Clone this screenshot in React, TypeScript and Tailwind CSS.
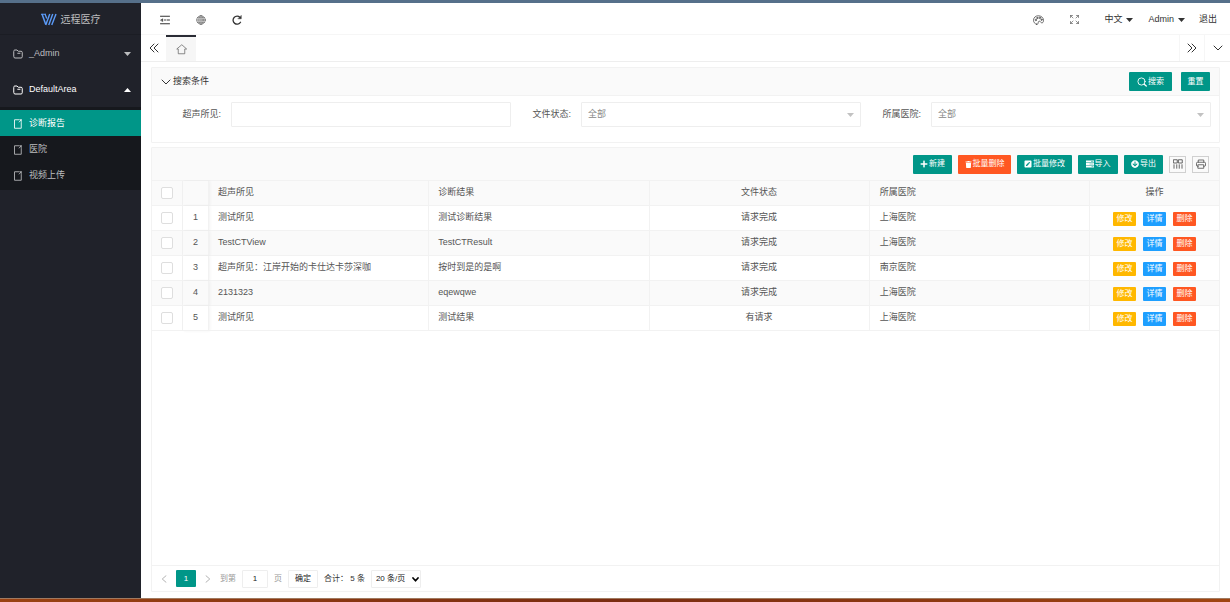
import React, { useState } from 'react';
import { FaPlus, FaTrash, FaPenSquare, FaArrowCircleDown } from 'react-icons/fa';

const stroke = {
  fill: 'none',
  stroke: 'currentColor',
  strokeLinecap: 'round' as const,
  strokeLinejoin: 'round' as const,
};

function Logo() {
  return (
    <svg className="h-[13px] w-4" viewBox="0 0 32 26" fill="none" stroke="#5b9bf8" aria-hidden="true">
      <path d="M2 2 L9.5 23" strokeWidth="3" />
      <path d="M8 2 L11.5 11" strokeWidth="2.6" />
      <path d="M0 2.5 H10" strokeWidth="2" />
      <path d="M9.5 24 L17.5 2" strokeWidth="2.8" />
      <path d="M15.5 24 L23.5 2" strokeWidth="2.8" />
      <path d="M21.5 24 L30 2" strokeWidth="2.8" />
    </svg>
  );
}

function FolderIcon() {
  return (
    <svg className="h-[10px] w-[10px]" viewBox="0 0 20 20" {...stroke} strokeWidth="2" aria-hidden="true">
      <path d="M1.5 4 Q1.5 2 3.5 2 H8 L10.5 4.5 H16 Q18.5 4.5 18.5 7 V15.5 Q18.5 18 16 18 H4 Q1.5 18 1.5 15.5 Z" />
      <path d="M9.5 8.5 H14" />
    </svg>
  );
}

function FileIcon() {
  return (
    <svg className="h-[10px] w-[10px]" viewBox="0 0 20 20" {...stroke} strokeWidth="1.7" aria-hidden="true">
      <path d="M11.5 1.5 H3 V18.5 H16.5 V7" />
      <path d="M12.5 6 L16.5 1.5 M13.5 1.5 H16.5 V5" />
    </svg>
  );
}

function MenuIcon() {
  return (
    <svg className="h-[10px] w-[10px]" viewBox="0 0 20 20" {...stroke} strokeWidth="2" aria-hidden="true">
      <path d="M1 2.5 H19 M9 10 H11 M14 10 H19 M1 17.5 H19" />
      <path d="M1.5 10 L5.5 7.5 V12.5 Z" fill="currentColor" strokeWidth="1" />
    </svg>
  );
}

function GlobeIcon() {
  return (
    <svg className="h-[10px] w-[10px] text-[#555]" viewBox="0 0 20 20" {...stroke} strokeWidth="1.2" aria-hidden="true">
      <circle cx="10" cy="10" r="8.6" />
      <ellipse cx="10" cy="10" rx="4.2" ry="8.6" />
      <path d="M10 1.4 V18.6 M1.4 10 H18.6 M2.8 5.5 H17.2 M2.8 14.5 H17.2" />
    </svg>
  );
}

function RefreshIcon() {
  return (
    <svg className="h-[10px] w-[10px]" viewBox="0 0 20 20" {...stroke} strokeWidth="2.6" aria-hidden="true">
      <path d="M17 14.5 A8 8 0 1 1 16 4.8" />
      <path d="M18.5 1.5 V7.5 H12.5 Z" fill="currentColor" strokeWidth="1" />
    </svg>
  );
}

function ThemeIcon() {
  return (
    <svg className="h-[10px] w-[11px]" viewBox="0 0 22 20" {...stroke} strokeWidth="1.4" aria-hidden="true">
      <path d="M7 18.5 C3 17.5 1 14 1 10.5 C1 5 5.5 1.5 10.5 1.5 C16.5 1.5 21 5.5 21 10.5 C21 14.5 19 16.5 17 15.5 C14.5 14.5 15 11.5 12 12.5 C9.5 13.5 11 16 10 17.5 C9.3 18.6 8.2 18.8 7 18.5 Z" />
      <circle cx="5.5" cy="10" r="1.3" />
      <circle cx="8.5" cy="6" r="1.3" />
      <circle cx="13.5" cy="5.8" r="1.3" />
      <circle cx="17" cy="9.5" r="1.3" />
    </svg>
  );
}

function FullscreenIcon() {
  return (
    <svg className="h-[9px] w-[9px] text-[#555]" viewBox="0 0 18 18" {...stroke} strokeWidth="1.3" aria-hidden="true">
      <path d="M1 5 V1 H5 M1 1 L6 6 M13 1 H17 V5 M17 1 L12 6 M1 13 V17 H5 M1 17 L6 12 M17 13 V17 H13 M17 17 L12 12" />
    </svg>
  );
}

function DoubleChevron({ right = false }: { right?: boolean }) {
  return (
    <svg className="h-[10px] w-[10px]" viewBox="0 0 20 20" {...stroke} strokeWidth="2" aria-hidden="true">
      <path d={right ? 'M2 2 L10 10 L2 18 M10 2 L18 10 L10 18' : 'M10 2 L2 10 L10 18 M18 2 L10 10 L18 18'} />
    </svg>
  );
}

function ChevronDown() {
  return (
    <svg className="h-[10px] w-[10px]" viewBox="0 0 20 20" {...stroke} strokeWidth="2" aria-hidden="true">
      <path d="M2 6 L10 14 L18 6" />
    </svg>
  );
}

function ChevronSide({ right = false }: { right?: boolean }) {
  return (
    <svg className="h-2 w-[6px]" viewBox="0 0 12 16" {...stroke} strokeWidth="1.8" aria-hidden="true">
      <path d={right ? 'M2 1.5 L9.5 8 L2 14.5' : 'M10 1.5 L2.5 8 L10 14.5'} />
    </svg>
  );
}

function HomeIcon() {
  return (
    <svg className="h-[11px] w-[11px]" viewBox="0 0 22 22" {...stroke} strokeWidth="1.5" aria-hidden="true">
      <path d="M11 2 L1.5 10 H4.5 V19.5 H17.5 V10 H20.5 Z" />
    </svg>
  );
}

function SearchIcon() {
  return (
    <svg className="h-[10px] w-[10px]" viewBox="0 0 20 20" {...stroke} strokeWidth="1.8" aria-hidden="true">
      <circle cx="9" cy="9" r="7.2" />
      <path d="M14.5 14.5 L18.5 18" strokeWidth="2.6" />
    </svg>
  );
}

function TasksIcon() {
  return (
    <svg className="h-2 w-2" viewBox="0 0 16 16" fill="currentColor" aria-hidden="true">
      <path
        fillRule="evenodd"
        d="M0 1 H16 V5 H0 Z M10 2.4 H14.8 V3.6 H10 Z M0 6 H16 V10 H0 Z M7 7.4 H14.8 V8.6 H7 Z M0 11 H16 V15 H0 Z M11 12.4 H14.8 V13.6 H11 Z"
      />
    </svg>
  );
}

function ColumnsIcon() {
  return (
    <svg className="h-[10px] w-[10px]" viewBox="0 0 20 20" {...stroke} strokeWidth="1.8" aria-hidden="true">
      <path d="M1.5 1.5 H8.5 V8 H1.5 Z M11.5 1.5 H18.5 V8 H11.5 Z M2 11.5 V18.5 M7.5 11.5 V18.5 M12.5 11.5 V18.5 M18 11.5 V18.5" />
    </svg>
  );
}

function PrintIcon() {
  return (
    <svg className="h-[10px] w-[10px]" viewBox="0 0 20 20" {...stroke} strokeWidth="1.7" aria-hidden="true">
      <path d="M4.5 6.5 V2 H15.5 V6.5 M4.5 14.5 H3 Q1 14.5 1 12.5 V8.5 Q1 6.5 3 6.5 H17 Q19 6.5 19 8.5 V12.5 Q19 14.5 17 14.5 H15.5 M4.5 11.5 H15.5 V18.5 H4.5 Z" />
    </svg>
  );
}

function Caret({ up = false, className = '' }: { up?: boolean; className?: string }) {
  return (
    <svg className={`h-1 w-[7px] ${className}`} viewBox="0 0 8 4" preserveAspectRatio="none" fill="currentColor" aria-hidden="true">
      <path d={up ? 'M0 4 L4 0 L8 4 Z' : 'M0 0 L4 4 L8 0 Z'} />
    </svg>
  );
}

const iconButton = 'flex h-full w-9 items-center justify-center';
const primaryButton =
  'flex h-[19px] items-center justify-center rounded-[1px] bg-[#009688] text-[8px] leading-[10px] text-white';
const navGroup = 'flex h-9 w-full items-center gap-[6px] pt-[2px] pr-[10px] pl-[13px]';

function Sidebar() {
  const pages = ['诊断报告', '医院', '视频上传'];
  return (
    <aside className="w-[141px] shrink-0 bg-[#20222a] text-[9px] text-[#bcbdbf]">
      <div className="flex h-8 items-center justify-center gap-1 border-b border-[#1b1d24] pt-[2px] text-[10px]">
        <Logo />
        <span>远程医疗</span>
      </div>
      <nav>
        <button type="button" className={navGroup}>
          <FolderIcon />
          <span className="grow text-left">_Admin</span>
          <Caret />
        </button>
        <button type="button" className={`${navGroup} text-white`}>
          <FolderIcon />
          <span className="grow text-left">DefaultArea</span>
          <Caret up />
        </button>
        <ul className="bg-[#16181d] pt-[3px] pb-[2px]">
          {pages.map((page, i) => (
            <li key={page}>
              <a
                href="#"
                className={`flex h-[26px] items-center gap-[6px] px-[13px] pt-px ${i === 0 ? 'bg-[#009688] text-white' : ''}`}
              >
                <FileIcon />
                {page}
              </a>
            </li>
          ))}
        </ul>
      </nav>
    </aside>
  );
}

function Header() {
  return (
    <header className="flex h-8 items-center justify-between border-b border-[#f6f6f6] bg-white pt-[2px] text-[9px] text-[#333]">
      <div className="flex h-full items-center pl-[6px]">
        <button type="button" aria-label="菜单" className={iconButton}><MenuIcon /></button>
        <button type="button" aria-label="网站" className={iconButton}><GlobeIcon /></button>
        <button type="button" aria-label="刷新" className={iconButton}><RefreshIcon /></button>
      </div>
      <div className="flex h-full items-center pr-[13px]">
        <button type="button" aria-label="主题" className={iconButton}><ThemeIcon /></button>
        <button type="button" aria-label="全屏" className={iconButton}><FullscreenIcon /></button>
        <button type="button" className="ml-3 flex items-center gap-1">中文<Caret /></button>
        <button type="button" className="ml-[15px] flex items-center gap-1">Admin<Caret /></button>
        <a href="#" className="ml-[14px]">退出</a>
      </div>
    </header>
  );
}

function TabBar() {
  return (
    <div className="flex h-[27px] items-stretch border-b border-[#eee] bg-white text-[#333]">
      <button type="button" aria-label="向左" className="flex w-[25px] items-center justify-center"><DoubleChevron /></button>
      <a href="#" aria-label="首页" className="flex w-[30px] items-center justify-center border-t-2 border-[#292b34] bg-[#f6f6f6] text-[#666]">
        <HomeIcon />
      </a>
      <div className="grow" />
      <button type="button" aria-label="向右" className="flex w-[25px] items-center justify-center border-l border-[#f6f6f6]"><DoubleChevron right /></button>
      <button type="button" aria-label="更多" className="flex w-[26px] items-center justify-center border-l border-[#f6f6f6]"><ChevronDown /></button>
    </div>
  );
}

const fieldBox = 'h-[25px] w-full rounded-[1px] border border-[#eee] bg-white px-[6px] text-[9px] outline-none';

function SelectField({ id, label }: { id: string; label: string }) {
  return (
    <div className="flex items-center">
      <label htmlFor={id} className="w-[70px] shrink-0 pr-[10px] text-right">{label}:</label>
      <div className="relative grow">
        <select id={id} className={`${fieldBox} appearance-none text-[#888]`}>
          <option>全部</option>
        </select>
        <Caret className="pointer-events-none absolute top-[11px] right-[7px] text-[#c2c2c2]" />
      </div>
    </div>
  );
}

function SearchPanel() {
  return (
    <section className="rounded-[1px] border border-[#f2f2f2] text-[9px]">
      <div className="flex h-7 items-center justify-between border-b border-[#f2f2f2] bg-[#fafafa] px-[9px] text-[#333]">
        <h2 className="flex items-center gap-[2px]"><ChevronDown />搜索条件</h2>
        <div className="flex gap-[9px]">
          <button type="button" className={`${primaryButton} w-[43px] gap-px`}><SearchIcon />搜索</button>
          <button type="button" className={`${primaryButton} w-[29px]`}>重置</button>
        </div>
      </div>
      <form className="grid grid-cols-3 pt-[6px] pr-2 pb-[15px] pl-[9px] text-[#555]">
        <div className="flex items-center">
          <label htmlFor="finding" className="w-[70px] shrink-0 pr-[10px] text-right">超声所见:</label>
          <input id="finding" type="text" className={fieldBox} />
        </div>
        <SelectField id="status" label="文件状态" />
        <SelectField id="hospital" label="所属医院" />
      </form>
    </section>
  );
}

const rows = [
  ['测试所见', '测试诊断结果', '请求完成', '上海医院'],
  ['TestCTView', 'TestCTResult', '请求完成', '上海医院'],
  ['超声所见：江岸开始的卡仕达卡莎深咖', '按时到是的是啊', '请求完成', '南京医院'],
  ['2131323', 'eqewqwe', '请求完成', '上海医院'],
  ['测试所见', '测试结果', '有请求', '上海医院'],
];

const cell = 'h-[25px] border-r border-b border-[#f2f2f2] font-normal';
const frozenCell = `${cell} text-center shadow-[1px_0_3px_rgba(0,0,0,0.05)]`;
const checkbox = 'mx-auto block h-3 w-3 appearance-none rounded-xs border border-[#dedede] bg-white checked:bg-[#009688]';
const rowButton = 'h-[14px] w-[23px] rounded-[1px] text-[8px] leading-[14px] text-white';
const toolSquare = 'flex h-[17px] w-[17px] items-center justify-center border border-[#d0d0d0] text-[#555]';

function Toolbar() {
  return (
    <div className="flex h-8 items-center justify-end gap-[6px] bg-[#fafafa] pr-[10px]">
      <button type="button" className={`${primaryButton} w-[39px] gap-px`}><FaPlus />新建</button>
      <button type="button" className="flex h-[19px] w-[53px] items-center justify-center gap-px rounded-[1px] bg-[#ff5722] text-[8px] leading-[10px] text-white">
        <FaTrash className="h-[7px] w-[7px]" />批量删除
      </button>
      <button type="button" className={`${primaryButton} w-[55px] gap-px`}><FaPenSquare />批量修改</button>
      <button type="button" className={`${primaryButton} w-10 gap-px`}><TasksIcon />导入</button>
      <button type="button" className={`${primaryButton} w-[39px] gap-px`}><FaArrowCircleDown />导出</button>
      <button type="button" aria-label="筛选列" className={toolSquare}><ColumnsIcon /></button>
      <button type="button" aria-label="打印" className={toolSquare}><PrintIcon /></button>
    </div>
  );
}

function DataTable() {
  const [selected, setSelected] = useState<number[]>([]);
  const toggle = (i: number) =>
    setSelected((s) => (s.includes(i) ? s.filter((n) => n !== i) : [...s, i]));
  return (
    <table className="w-full table-fixed border-separate border-spacing-0 border-t border-[#f2f2f2] text-left text-[9px] text-[#555]">
      <colgroup>
        <col className="w-[31px]" />
        <col className="w-[26px]" />
        <col />
        <col />
        <col />
        <col />
        <col className="w-[129px]" />
      </colgroup>
      <thead>
        <tr className="bg-[#fafafa]">
          <th className={cell}>
            <input
              type="checkbox"
              aria-label="全选"
              className={checkbox}
              checked={selected.length === rows.length}
              onChange={() => setSelected(selected.length === rows.length ? [] : rows.map((_, i) => i))}
            />
          </th>
          <th className={frozenCell} />
          <th className={`${cell} pl-[9px]`}>超声所见</th>
          <th className={`${cell} pl-[9px]`}>诊断结果</th>
          <th className={`${cell} text-center`}>文件状态</th>
          <th className={`${cell} pl-[10px]`}>所属医院</th>
          <th className={`${cell} border-r-0 text-center`}>操作</th>
        </tr>
      </thead>
      <tbody>
        {rows.map((row, i) => (
          <tr key={i} className={i % 2 ? 'bg-[#fafafa]' : 'bg-white'}>
            <td className={cell}>
              <input type="checkbox" aria-label={`选择 ${i + 1}`} className={checkbox} checked={selected.includes(i)} onChange={() => toggle(i)} />
            </td>
            <td className={frozenCell}>{i + 1}</td>
            <td className={`${cell} truncate pl-[9px]`}>{row[0]}</td>
            <td className={`${cell} truncate pl-[9px]`}>{row[1]}</td>
            <td className={`${cell} text-center`}>{row[2]}</td>
            <td className={`${cell} pl-[10px]`}>{row[3]}</td>
            <td className={`${cell} border-r-0`}>
              <div className="flex justify-center gap-[7px] pt-[2px]">
                <button type="button" className={`${rowButton} bg-[#ffb800]`}>修改</button>
                <button type="button" className={`${rowButton} bg-[#1e9fff]`}>详情</button>
                <button type="button" className={`${rowButton} bg-[#ff5722]`}>删除</button>
              </div>
            </td>
          </tr>
        ))}
      </tbody>
    </table>
  );
}

function Pager() {
  const box = 'h-[18px] rounded-[1px] border border-[#eee] bg-white text-center text-[8px] text-[#222]';
  return (
    <div className="flex h-[26px] items-center border-t border-[#f2f2f2] pl-1 text-[8px] text-[#999]">
      <button type="button" aria-label="上一页" className="flex w-5 justify-center pr-1 text-[#aaa]"><ChevronSide /></button>
      <button type="button" className="h-[17px] w-5 rounded-[1px] bg-[#009688] text-white">1</button>
      <button type="button" aria-label="下一页" className="flex w-6 justify-center text-[#aaa]"><ChevronSide right /></button>
      <label htmlFor="page">到第</label>
      <input id="page" type="text" defaultValue="1" className={`${box} mx-[6px] w-[26px]`} />
      <span>页</span>
      <button type="button" className={`${box} ml-[6px] w-[30px]`}>确定</button>
      <span className="ml-[6px] text-[#333]">合计： 5 条</span>
      <div className="relative ml-[6px]">
        <select aria-label="每页条数" className={`${box} w-[50px] appearance-none pr-3 pl-1 text-left`}>
          <option>20 条/页</option>
        </select>
        <svg className="pointer-events-none absolute top-[7px] right-[2px] h-[5px] w-[7px] text-black" viewBox="0 0 14 10" {...stroke} strokeWidth="3.4" aria-hidden="true">
          <path d="M2 2 L7 7.5 L12 2" />
        </svg>
      </div>
    </div>
  );
}

export default function App() {
  return (
    <div className="flex h-screen flex-col bg-white font-['Liberation_Sans','Noto_Sans_CJK_SC',sans-serif]">
      <div className="h-[3px] shrink-0 bg-[#56708a]" />
      <div className="flex min-h-0 grow">
        <Sidebar />
        <div className="flex min-w-0 grow flex-col">
          <Header />
          <TabBar />
          <main className="flex min-h-0 grow flex-col gap-1 px-[10px] pt-[5px] pb-[6px]">
            <SearchPanel />
            <section className="flex min-h-0 grow flex-col rounded-[1px] border border-[#f2f2f2]">
              <Toolbar />
              <div className="min-h-0 grow overflow-auto"><DataTable /></div>
              <Pager />
            </section>
          </main>
        </div>
      </div>
      <div className="h-1 shrink-0 border-t border-[#a07a60] bg-linear-to-r from-[#9a4212] via-[#7a2c10] to-[#a04410]" />
    </div>
  );
}
